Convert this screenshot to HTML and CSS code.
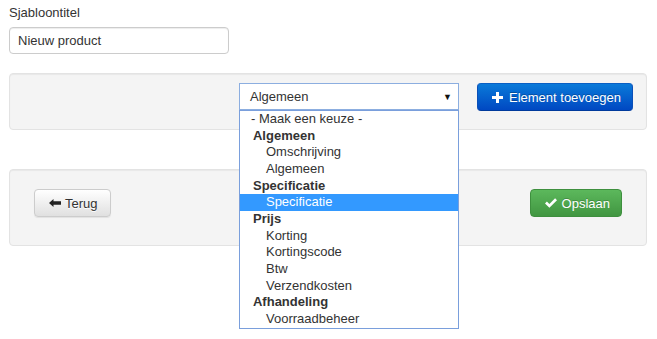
FILE: index.html
```html
<!DOCTYPE html>
<html lang="nl">
<head>
    <meta charset="UTF-8">
    <meta name="viewport" content="width=device-width, initial-scale=1.0">
    <title>Sjabloon bewerken</title>
    <link rel="stylesheet" href="styles.css">
</head>
<body>
    <div class="page">
        <div class="field">
            <label for="title">Sjabloontitel</label>
            <div class="input" id="title">Nieuw product</div>
        </div>

        <!-- element kiezen en toevoegen -->
        <div class="well toolbar">
            <div class="select-wrap">
                <div class="select">
                    <span>Algemeen</span>
                    <span class="caret">&#9660;</span>
                </div>
                <ul class="options">
                    <li class="none">- Maak een keuze -</li>
                    <li class="group">Algemeen</li>
                    <li class="opt">Omschrijving</li>
                    <li class="opt">Algemeen</li>
                    <li class="group">Specificatie</li>
                    <li class="opt active">Specificatie</li>
                    <li class="group">Prijs</li>
                    <li class="opt">Korting</li>
                    <li class="opt">Kortingscode</li>
                    <li class="opt">Btw</li>
                    <li class="opt">Verzendkosten</li>
                    <li class="group">Afhandeling</li>
                    <li class="opt">Voorraadbeheer</li>
                </ul>
            </div>
            <button class="btn btn-primary">
                <svg class="icon" width="11" height="11" viewBox="0 0 11 11"><path d="M4 0h3v4h4v3H7v4H4V7H0V4h4z" fill="#fff"/></svg>
                Element toevoegen
            </button>
        </div>

        <div class="well actions">
            <button class="btn btn-default">
                <svg class="icon" width="12" height="8" viewBox="0 0 12 8"><path d="M0 4 4.5 0v2.3H12v3.4H4.5V8z" fill="#222"/></svg>
                Terug
            </button>
            <button class="btn btn-success">
                <svg class="icon" width="12" height="10" viewBox="0 0 12 10"><path d="M0 5.4 1.9 3.5 4.4 6 10.1 0.3 12 2.2 4.4 9.8z" fill="#fff"/></svg>
                Opslaan
            </button>
        </div>
    </div>
</body>
</html>
```

FILE: styles.css
```css
html {
    height: 100%;
}
body {
    margin: 0;
    padding: 3px 10px 0 9px;
    min-height: 336px;
    font-family: "Liberation Sans", Arial, sans-serif;
    font-size: 13px;
    color: #333;
    background: #fff;
}
.page {
    width: 638px;
    min-height: 336px;
}
.field label {
    display: block;
    line-height: 20px;
    margin-bottom: 4px;
}
.input {
    width: 220px;
    height: 27px;
    box-sizing: border-box;
    padding: 0 8px;
    line-height: 25px;
    border: 1px solid #ccc;
    border-radius: 4px;
    box-shadow: inset 0 1px 1px rgba(0, 0, 0, .075);
}
.well {
    background: #f4f4f4;
    border: 1px solid #e3e3e3;
    border-radius: 4px;
    box-shadow: inset 0 1px 1px rgba(0, 0, 0, .05);
    display: flex;
    align-items: flex-start;
}
.toolbar {
    position: relative;
    z-index: 2;
    margin-top: 19px;
    padding: 9px 13px 18px;
    justify-content: flex-end;
    gap: 18px;
}
.actions {
    margin-top: 39px;
    padding: 19px 24px 28px;
    justify-content: space-between;
}
.select-wrap {
    position: relative;
    width: 220px;
}
.select {
    height: 27px;
    box-sizing: border-box;
    border: 1px solid #8caee0;
    background: #fff;
    display: flex;
    justify-content: space-between;
    align-items: center;
    padding: 0 6px 0 10px;
}
.caret {
    font-size: 9px;
    color: #111;
}
.options {
    position: absolute;
    top: 100%;
    left: 0;
    width: 220px;
    box-sizing: border-box;
    margin: 0;
    padding: 0;
    list-style: none;
    background: #fff;
    border: 1px solid #7a9fdc;
    z-index: 5;
}
.options li {
    height: 16.66px;
    line-height: 16.66px;
    white-space: nowrap;
}
.options .none {
    padding-left: 11px;
}
.options .group {
    padding-left: 13px;
    font-weight: bold;
}
.options .opt {
    padding-left: 26px;
}
.options .active {
    background: #3399ff;
    color: #fff;
}
.btn {
    height: 28px;
    box-sizing: border-box;
    display: inline-flex;
    align-items: center;
    gap: 6px;
    padding: 0 11px 0 14px;
    font-family: inherit;
    font-size: 13px;
    border-radius: 4px;
    border: 1px solid transparent;
    cursor: pointer;
}
.btn-primary {
    color: #fff;
    background: linear-gradient(#0a7ad9, #0048c2);
    border-color: #0a5fc4 #0a4fb8 #003a9c;
    text-shadow: 0 -1px 0 rgba(0, 0, 0, .25);
}
.btn-default {
    color: #333;
    background: linear-gradient(#fff, #e0e0e0);
    border-color: #ccc;
    text-shadow: 0 1px 0 #fff;
    box-shadow: 0 1px 1px rgba(0, 0, 0, .075);
    padding: 0 12px 0 14px;
    gap: 4px;
}
.btn-success {
    color: #fff;
    background: linear-gradient(#5cb85c, #419641);
    border-color: #3e8f3e;
    text-shadow: 0 -1px 0 rgba(0, 0, 0, .2);
    padding: 0 11px 0 14px;
    gap: 5px;
}
.icon {
    flex: none;
}
```
